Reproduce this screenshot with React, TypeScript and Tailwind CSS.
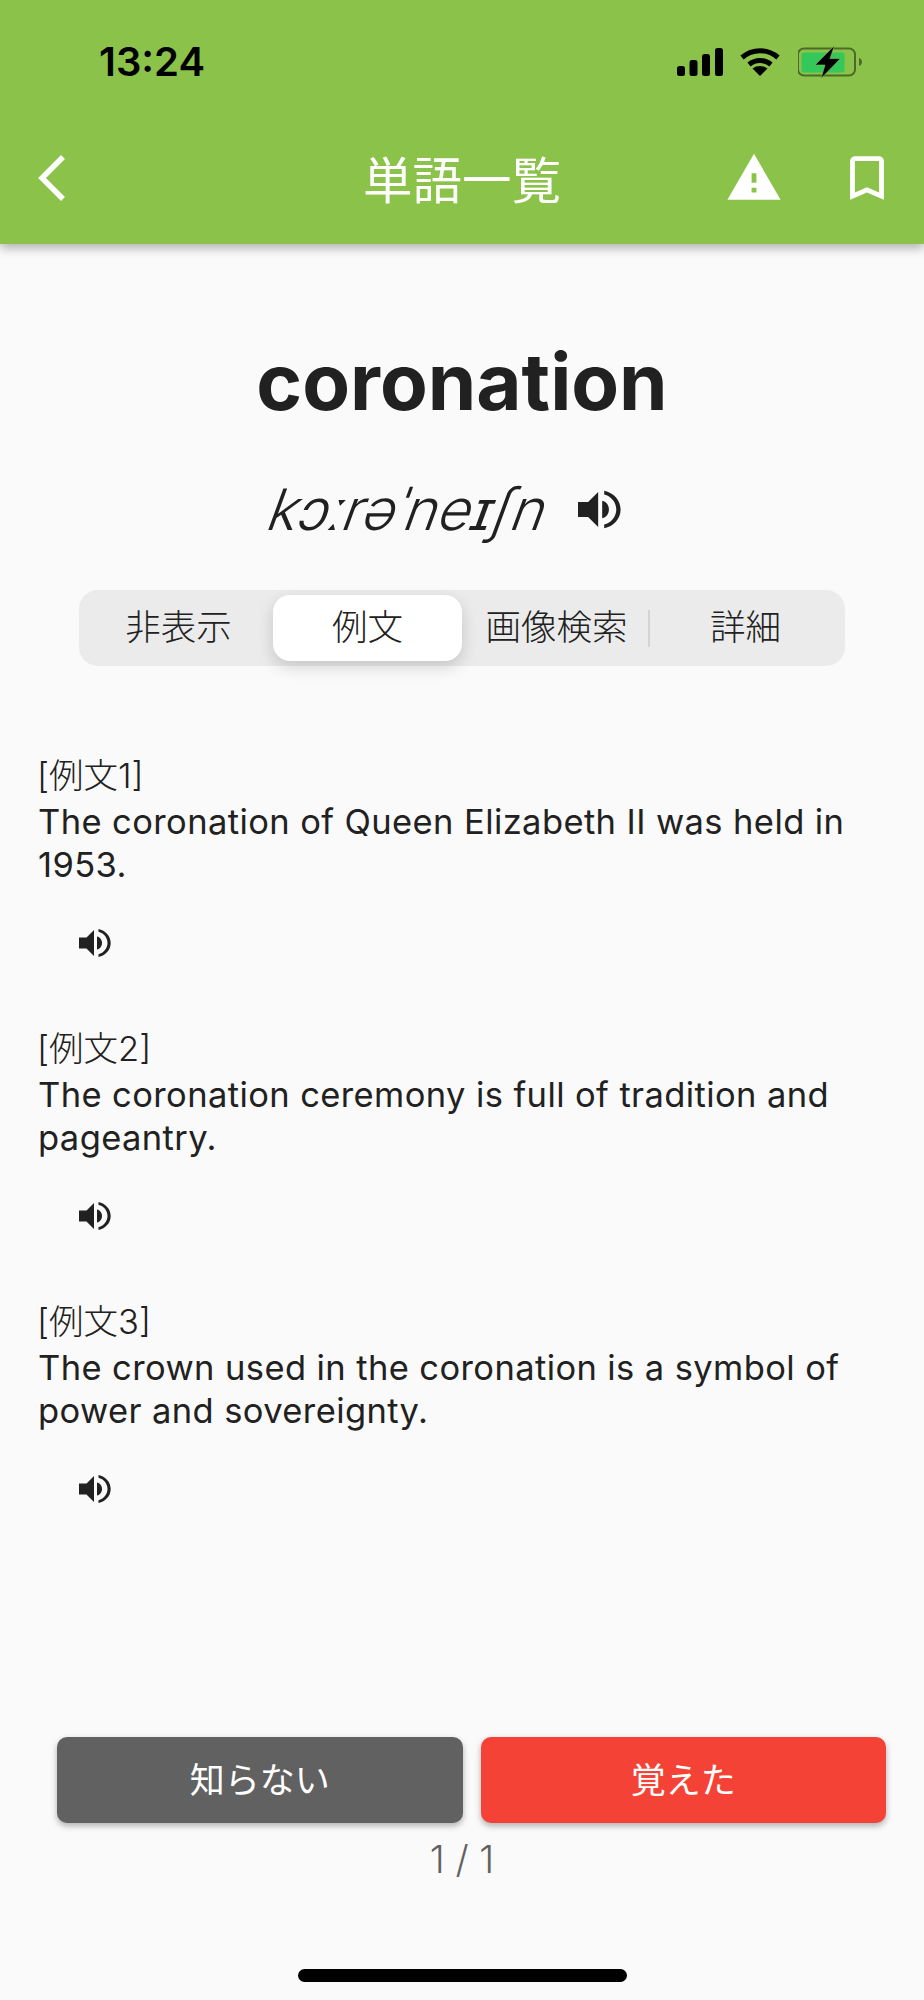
const SANS = "font-['Inter','Noto_Sans_CJK_JP',sans-serif]"

const examples = [
  { label: '[例文1]', text: 'The coronation of Queen Elizabeth II was held in 1953.' },
  { label: '[例文2]', text: 'The coronation ceremony is full of tradition and pageantry.' },
  { label: '[例文3]', text: 'The crown used in the coronation is a symbol of power and sovereignty.' },
]

const Speaker = ({ className }: { className: string }) => (
  <svg viewBox="0 0 32 30" className={className} fill="#212121">
    <path d="M0 9.5h7.5L15 2v26l-7.5-7.5H0z" />
    <path d="M18 8.5c3 .6 5 3.300 5 6.500s-2 5.900-5 6.500z" />
    <path d="M19.500 1v2.800c5.200 1.300 9 5.900 9 11.200s-3.800 9.900-9 11.200V29c6.900-1.400 12.200-7 12.200-14S26.400 2.400 19.500 1z" />
  </svg>
)

const StatusBar = () => (
  <div className="flex h-[37px] items-center justify-between pl-[99px] pr-[61px]">
    <span className="text-[40px] leading-none font-semibold text-black">13:24</span>
    <div className="flex items-center">
      <svg viewBox="0 0 46 28" className="h-[28px] w-[46px]" fill="#000">
        <rect x="0" y="18" width="8" height="10" rx="2.500" />
        <rect x="12.500" y="12" width="8" height="16" rx="2.500" />
        <rect x="25" y="6" width="8" height="22" rx="2.500" />
        <rect x="38" y="0" width="8" height="28" rx="2.500" />
      </svg>
      <svg viewBox="0 0 40 28" className="ml-[17px] h-[28px] w-[40px]" fill="none" stroke="#000" strokeWidth="5">
        <path d="M2 9.500c10.500-9 25.500-9 36 0" />
        <path d="M9 16.500c6.500-5.300 15.500-5.300 22 0" />
        <path d="M20 28l-7.500-7.500c4.300-3.300 10.700-3.300 15 0z" fill="#000" stroke="none" />
      </svg>
      <svg viewBox="0 0 65 32" className="ml-[18px] h-[32px] w-[65px]">
        <rect x="0" y="2.500" width="57" height="27" rx="6" fill="none" stroke="#000" strokeOpacity="0.45" strokeWidth="2" />
        <rect x="3.500" y="6.500" width="43" height="20" rx="2.500" fill="#34C759" />
        <path d="M61 12c2 .6 3 2.200 3 4s-1 3.400-3 4z" fill="#000" fillOpacity="0.45" />
        <path d="M36.500 -0.500L17 19h10l-4 13.500 19.500-20H32z" fill="#000" stroke="#8BC34A" strokeWidth="0.6" />
      </svg>
    </div>
  </div>
)

const NavBar = () => (
  <div className="relative mt-[69px] flex h-[58px] items-center justify-between pl-[38px] pr-[28px]">
    <svg viewBox="0 0 27 46" className="h-[46px] w-[27px]" fill="none" stroke="#fff" strokeWidth="5.500">
      <path d="M25 2L4 23l21 21" />
    </svg>
    <h1 className="absolute inset-x-0 top-[3px] text-center text-[49.5px] leading-[58px] font-normal text-white">単語一覧</h1>
    <div className="flex items-center gap-[55px]">
      <svg viewBox="0 0 24 24" className="h-[58px] w-[58px]" fill="#fff">
        <path d="M1 21h22L12 2 1 21zm12-3h-2v-2h2v2zm0-4h-2v-4h2v4z" />
      </svg>
      <svg viewBox="0 0 24 24" className="h-[58px] w-[58px]" fill="#fff">
        <path d="M17 3H7c-1.100 0-1.990.9-1.990 2L5 21l7-3 7 3V5c0-1.100-.9-2-2-2zm0 15l-5-2.180L7 18V5h10v13z" />
      </svg>
    </div>
  </div>
)

const Segments = () => (
  <div className="mx-[79px] mt-[51px] grid h-[76px] grid-cols-4 rounded-[19px] bg-[#ebebeb] px-[5px] py-[5px] text-[35.5px] font-light text-[#212121]">
    <div className="flex items-center justify-center">非表示</div>
    <div className="flex items-center justify-center rounded-[17px] bg-white shadow-[0_6px_16px_rgba(0,0,0,0.16)]">例文</div>
    <div className="flex items-center justify-center whitespace-nowrap">画像検索</div>
    <div className="relative flex items-center justify-center">
      詳細
      <span className="absolute top-[15px] -left-[3px] h-[37px] w-[2px] bg-[#d4d4d4]" />
    </div>
  </div>
)

export default function App() {
  return (
    <div lang="ja" className={`flex h-[2000px] w-[924px] flex-col overflow-hidden bg-[#fafafa] text-[#212121] ${SANS}`}>
      <header className="relative z-10 h-[244px] bg-[#8bc34a] pt-[43px] shadow-[0_4px_10px_rgba(0,0,0,0.3)]">
        <StatusBar />
        <NavBar />
      </header>

      <div className="mt-[93px] text-center text-[78px] leading-[90px] font-bold">coronation</div>

      <div className="mt-[52px] flex h-[60px] items-center justify-center pr-[32px]">
        <span className="inline-block -skew-x-[20deg] text-[57px] leading-none font-[350]">kɔːrəˈneɪʃn</span>
        <Speaker className="ml-[31px] h-[41px] w-[43px]" />
      </div>

      <Segments />

      <div className="mt-[86px] flex flex-col gap-[67px] px-[38px]">
        {examples.map((ex) => (
          <div key={ex.label}>
            <div className="-ml-px text-[34.5px] leading-[48px] font-light text-[#212121]">{ex.label}</div>
            <p className="text-[34.5px] leading-[43px] font-normal tracking-[0.4px]">{ex.text}</p>
            <Speaker className="mt-[42px] ml-[41px] h-[30px] w-[32px]" />
          </div>
        ))}
      </div>

      <div className="mt-auto">
        <div className="flex gap-[18px] pr-[38px] pl-[57px]">
          <button className="h-[86px] flex-1 rounded-[10px] bg-[#616161] text-[35px] font-normal text-white shadow-[0_3px_6px_rgba(0,0,0,0.3)]">知らない</button>
          <button className="h-[86px] flex-1 rounded-[10px] bg-[#f44336] text-[35px] font-normal text-white shadow-[0_3px_6px_rgba(0,0,0,0.3)]">覚えた</button>
        </div>
        <div className="mt-[14px] text-center text-[38px] leading-[44px] font-light text-[#616161]">1 / 1</div>
        <div className="mx-auto mt-[88px] mb-[18px] h-[13px] w-[329px] rounded-full bg-black" />
      </div>
    </div>
  )
}
